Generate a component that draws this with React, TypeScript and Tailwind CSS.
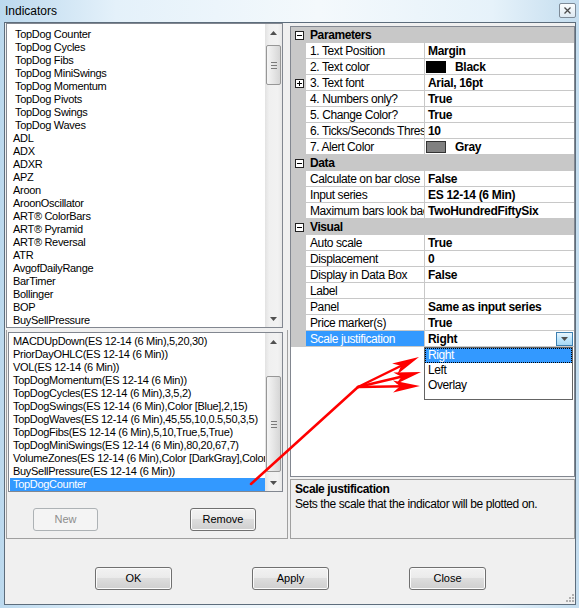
import React from 'react';

const indicatorNames = [
  'TopDog Counter',
  'TopDog Cycles',
  'TopDog Fibs',
  'TopDog MiniSwings',
  'TopDog Momentum',
  'TopDog Pivots',
  'TopDog Swings',
  'TopDog Waves',
  'ADL',
  'ADX',
  'ADXR',
  'APZ',
  'Aroon',
  'AroonOscillator',
  'ART® ColorBars',
  'ART® Pyramid',
  'ART® Reversal',
  'ATR',
  'AvgofDailyRange',
  'BarTimer',
  'Bollinger',
  'BOP',
  'BuySellPressure',
];

const applied = [
  'MACDUpDown(ES 12-14 (6 Min),5,20,30)',
  'PriorDayOHLC(ES 12-14 (6 Min))',
  'VOL(ES 12-14 (6 Min))',
  'TopDogMomentum(ES 12-14 (6 Min))',
  'TopDogCycles(ES 12-14 (6 Min),3,5,2)',
  'TopDogSwings(ES 12-14 (6 Min),Color [Blue],2,15)',
  'TopDogWaves(ES 12-14 (6 Min),45,55,10,0.5,50,3,5)',
  'TopDogFibs(ES 12-14 (6 Min),5,10,True,5,True)',
  'TopDogMiniSwings(ES 12-14 (6 Min),80,20,67,7)',
  'VolumeZones(ES 12-14 (6 Min),Color [DarkGray],Color [Gray])',
  'BuySellPressure(ES 12-14 (6 Min))',
  'TopDogCounter',
];

type Prop = { name: string; value: string; swatch?: 'black' | 'gray'; expand?: boolean; selected?: boolean };

const sections: { title: string; props: Prop[] }[] = [
  {
    title: 'Parameters',
    props: [
      { name: '1. Text Position', value: 'Margin' },
      { name: '2. Text color', value: 'Black', swatch: 'black' },
      { name: '3. Text font', value: 'Arial, 16pt', expand: true },
      { name: '4. Numbers only?', value: 'True' },
      { name: '5. Change Color?', value: 'True' },
      { name: '6. Ticks/Seconds Threshold', value: '10' },
      { name: '7. Alert Color', value: 'Gray', swatch: 'gray' },
    ],
  },
  {
    title: 'Data',
    props: [
      { name: 'Calculate on bar close', value: 'False' },
      { name: 'Input series', value: 'ES 12-14 (6 Min)' },
      { name: 'Maximum bars look back', value: 'TwoHundredFiftySix' },
    ],
  },
  {
    title: 'Visual',
    props: [
      { name: 'Auto scale', value: 'True' },
      { name: 'Displacement', value: '0' },
      { name: 'Display in Data Box', value: 'False' },
      { name: 'Label', value: '' },
      { name: 'Panel', value: 'Same as input series' },
      { name: 'Price marker(s)', value: 'True' },
      { name: 'Scale justification', value: 'Right', selected: true },
    ],
  },
];

function Tri({ up }: { up?: boolean }) {
  return (
    <svg width="7" height="4" viewBox="0 0 7 4">
      <path d={up ? 'M0 4L3.5 0L7 4Z' : 'M0 0H7L3.5 4Z'} fill="#505050" />
    </svg>
  );
}

function ScrollBar({ gap, thumb }: { gap: number; thumb: number }) {
  return (
    <div className="flex w-[17px] shrink-0 flex-col bg-[linear-gradient(90deg,#e2e2e2,#f0f0f0_25%,#f2f2f2_75%,#e8e8e8)]">
      <div className="flex h-[17px] shrink-0 items-center justify-center">
        <Tri up />
      </div>
      <div className="shrink-0" style={{ height: gap }} />
      <div
        className="mx-[1px] flex shrink-0 flex-col items-center justify-center gap-[2px] rounded-[2px] border border-[#979797] bg-[linear-gradient(90deg,#f5f5f5,#e6e6e6_50%,#d6d6d6)]"
        style={{ height: thumb }}
      >
        <span className="h-px w-[6px] bg-[#7a7a7a]" />
        <span className="h-px w-[6px] bg-[#7a7a7a]" />
        <span className="h-px w-[6px] bg-[#7a7a7a]" />
      </div>
      <div className="flex-1" />
      <div className="flex h-[17px] shrink-0 items-center justify-center">
        <Tri />
      </div>
    </div>
  );
}

function ExpandBox({ plus }: { plus?: boolean }) {
  return (
    <svg width="9" height="9" viewBox="0 0 9 9">
      <rect x="0.5" y="0.5" width="8" height="8" fill="#fff" stroke="#222" />
      <path d="M2 4.5H7" stroke="#000" />
      {plus && <path d="M4.5 2V7" stroke="#000" />}
    </svg>
  );
}

function WinButton({ label, width, disabled }: { label: string; width: string; disabled?: boolean }) {
  return (
    <button
      disabled={disabled}
      className={`flex h-[23px] items-center justify-center rounded-[3px] border text-[11px] ${width} ${
        disabled
          ? 'border-[#adb2b5] bg-[#f4f4f4] text-[#8d8d8d]'
          : 'border-[#707070] bg-[linear-gradient(#f2f2f2,#ebebeb_45%,#dddddd_50%,#cfcfcf)] text-black shadow-[inset_0_0_0_1px_#fbfbfb]'
      }`}
    >
      {label}
    </button>
  );
}

// arrowhead with a notched back, pointing from (x1,y1) to (x2,y2)
function head(x1: number, y1: number, x2: number, y2: number) {
  const dx = x2 - x1;
  const dy = y2 - y1;
  const l = Math.hypot(dx, dy);
  const ux = dx / l;
  const uy = dy / l;
  const px = -uy;
  const py = ux;
  const bx = x2 - ux * 27;
  const by = y2 - uy * 27;
  const nx = x2 - ux * 20;
  const ny = y2 - uy * 20;
  return `${x2},${y2} ${bx + px * 6},${by + py * 6} ${nx},${ny} ${bx - px * 6},${by - py * 6}`;
}

function Annotation() {
  const jx = 358;
  const jy = 387;
  const tips = [
    [419, 357],
    [421, 372],
    [420, 386],
  ];
  return (
    <svg className="pointer-events-none absolute left-0 top-0" width="579" height="608">
      <line x1="251" y1="484" x2={jx} y2={jy} stroke="#f00" strokeWidth="2.5" strokeLinecap="round" />
      {tips.map(([x, y]) => (
        <g key={y}>
          <line x1={jx} y1={jy} x2={x - (x - jx) * 0.25} y2={y - (y - jy) * 0.25} stroke="#f00" strokeWidth="2.5" strokeLinecap="round" />
          <polygon points={head(jx, jy, x, y)} fill="#f00" />
        </g>
      ))}
    </svg>
  );
}

export default function App() {
  return (
    <div className="relative flex h-[608px] w-[579px] flex-col overflow-hidden bg-[linear-gradient(90deg,#bcd9ee,#e4f1fa_20%,#f4f9fc_55%,#e6f2fa_85%,#c4ddef)] pb-[3px] pl-[4px] pr-[3px] font-['Liberation_Sans',Arial,sans-serif] text-black">
      {/* caption */}
      <div className="flex h-[22px] shrink-0 items-center justify-between pl-[1px]">
        <span className="text-[12px] leading-none">Indicators</span>
        <div className="mb-[2px] flex h-[15px] w-[17px] items-center justify-center rounded-[2px] border border-[#7d8a97] bg-[linear-gradient(#fbfdfe,#dde9f2)]">
          <svg width="7" height="7" viewBox="0 0 7 7">
            <path d="M0.5 0.5L6.5 6.5M6.5 0.5L0.5 6.5" stroke="#4a4a4a" strokeWidth="1.3" />
          </svg>
        </div>
      </div>

      {/* client area */}
      <div className="flex flex-1 flex-col border border-[#5d6d7c] bg-[#f0f0f0]">
        <div className="flex h-[516px] shrink-0 gap-[2px]">
          {/* indicator lists */}
          <div className="flex w-[283px] shrink-0 flex-col">
            <div className="ml-[1px] flex h-[305px] w-[277px] shrink-0 border border-[#828790] bg-white">
              <div className="flex-1 overflow-hidden pt-[4px] text-[11px] tracking-[-0.3px]">
                {indicatorNames.map((n) => (
                  <div
                    key={n}
                    className={`h-[13px] whitespace-nowrap leading-[13px] ${n.startsWith('TopDog') ? 'pl-[8px]' : 'pl-[6px]'}`}
                  >
                    {n}
                  </div>
                ))}
              </div>
              <ScrollBar gap={4} thumb={40} />
            </div>

            <div className="ml-[1px] mt-[2px] flex h-[209px] w-[282px] shrink-0 flex-col border-x border-b border-[#a0a0a0]">
              <div className="ml-[1px] mt-[2px] flex h-[160px] w-[275px] shrink-0 border border-[#828790] bg-white">
                <div className="flex-1 overflow-hidden pt-[2px] text-[11px] tracking-[-0.3px]">
                  {applied.map((n, i) => (
                    <div
                      key={n}
                      className={`ml-[1px] h-[13px] overflow-hidden whitespace-nowrap pl-[3px] leading-[13px] ${
                        i === applied.length - 1 ? 'bg-[#3399ff] text-white' : ''
                      }`}
                    >
                      {n}
                    </div>
                  ))}
                </div>
                <ScrollBar gap={26} thumb={96} />
              </div>
              <div className="mt-[16px] flex">
                <div className="ml-[26px]">
                  <WinButton label="New" width="w-[65px]" disabled />
                </div>
                <div className="ml-[92px]">
                  <WinButton label="Remove" width="w-[66px]" />
                </div>
              </div>
            </div>
          </div>

          {/* property grid */}
          <div className="flex w-[285px] shrink-0 flex-col">
            <div className="relative mt-[3px] h-[451px] shrink-0 border border-[#828790] bg-white text-[12px] tracking-[-0.4px]">
              {sections.map((s) => (
                <div key={s.title}>
                  <div className="flex h-[16px] items-center bg-[#c8c8c8]">
                    <div className="flex w-[15px] shrink-0 items-center justify-center pl-[1px]">
                      <ExpandBox />
                    </div>
                    <span className="pl-[4px] font-bold leading-none">{s.title}</span>
                  </div>
                  {s.props.map((p) => (
                    <div key={p.name} className="flex h-[16px]">
                      <div className="flex w-[15px] shrink-0 items-center justify-center bg-[#c8c8c8] pl-[1px]">
                        {p.expand && <ExpandBox plus />}
                      </div>
                      <div
                        className={`flex w-[119px] shrink-0 items-center overflow-hidden whitespace-nowrap border-b border-r border-[#c8c8c8] pl-[4px] ${
                          p.selected ? 'bg-[#3399ff] text-white' : ''
                        }`}
                      >
                        {p.name}
                      </div>
                      <div className="flex min-w-0 flex-1 items-center overflow-hidden whitespace-nowrap border-b border-[#c8c8c8] text-[12px] font-bold tracking-[-0.3px]">
                        {p.swatch && (
                          <span
                            className={`ml-[1px] mr-[9px] h-[12px] w-[20px] shrink-0 border ${
                              p.swatch === 'black' ? 'border-black bg-black' : 'border-[#333] bg-[#808080]'
                            }`}
                          />
                        )}
                        <span className={p.swatch ? '' : 'pl-[3px]'}>{p.value}</span>
                        {p.selected && (
                          <div className="ml-auto mr-[1px] flex h-[14px] w-[17px] items-center justify-center border border-[#3c7fb1] bg-[linear-gradient(#eaf6fd,#bee6fd_50%,#a7d9f5)]">
                            <Tri />
                          </div>
                        )}
                      </div>
                    </div>
                  ))}
                </div>
              ))}

              {/* open value list */}
              <div className="absolute left-[133px] top-[320px] h-[53px] w-[149px] border border-[#646464] bg-white">
                <div className="h-[15px] border border-dotted border-black bg-[#3399ff] pl-[2px] leading-[13px] text-white">
                  Right
                </div>
                <div className="h-[15px] pl-[3px] leading-[15px]">Left</div>
                <div className="h-[15px] pl-[3px] leading-[15px]">Overlay</div>
              </div>
            </div>

            <div className="mt-[2px] h-[60px] shrink-0 border border-[#a0a0a0] bg-[#f0f0f0] pl-[4px] pt-[2px] text-[12px] leading-[15px] tracking-[-0.4px]">
              <div className="font-bold">Scale justification</div>
              <div>Sets the scale that the indicator will be plotted on.</div>
            </div>
          </div>
        </div>

        {/* dialog buttons */}
        <div className="flex flex-1 items-start gap-[80px] pl-[90px] pt-[28px]">
          <WinButton label="OK" width="w-[77px]" />
          <WinButton label="Apply" width="w-[77px]" />
          <WinButton label="Close" width="w-[77px]" />
        </div>
      </div>

      {/* size grip */}
      <svg className="absolute bottom-[6px] right-[5px]" width="9" height="9" viewBox="0 0 9 9">
        {[
          [7, 1],
          [4, 4],
          [7, 4],
          [1, 7],
          [4, 7],
          [7, 7],
        ].map(([x, y]) => (
          <rect key={`${x}-${y}`} x={x} y={y} width="2" height="2" fill="#b0b0b0" />
        ))}
      </svg>

      <Annotation />
    </div>
  );
}
